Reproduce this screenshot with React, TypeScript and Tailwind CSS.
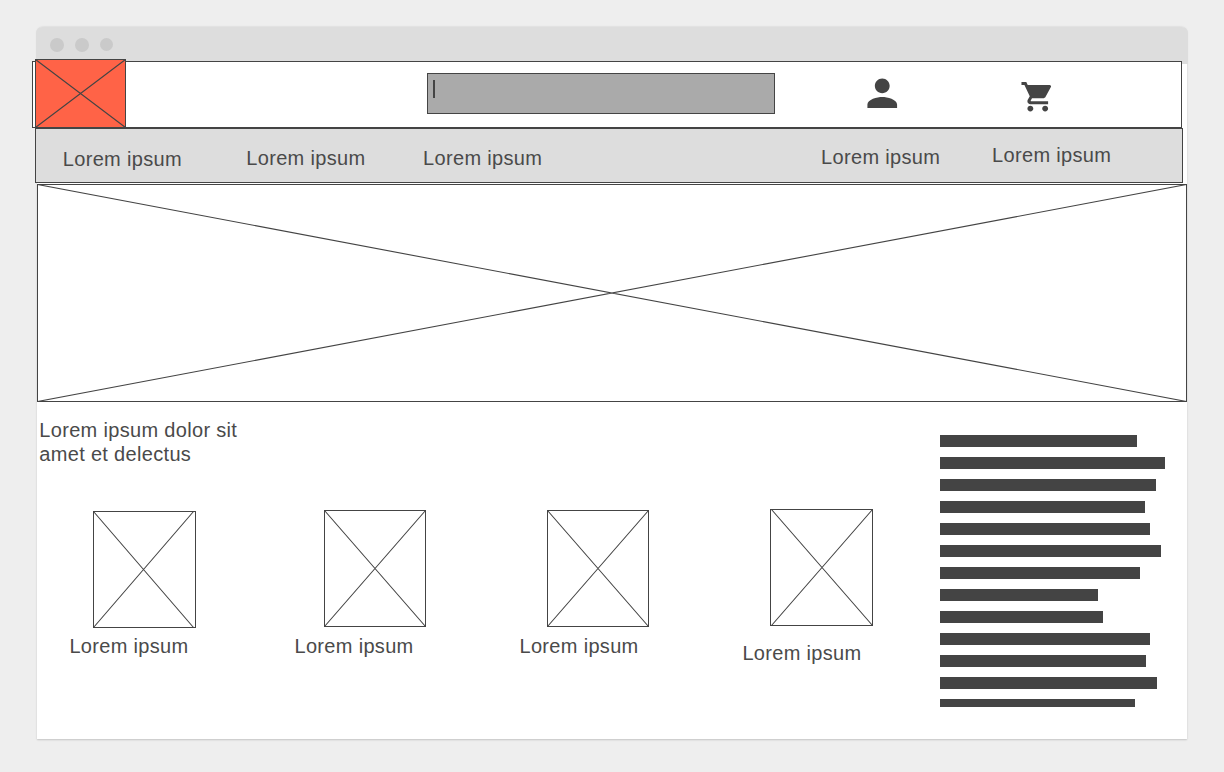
import React from "react";

type CrossProps = { width: number; height: number; inset?: [number, number]; className: string };

/* Image placeholder: an outlined box with both diagonals. */
function ImagePlaceholder({ width, height, inset = [0, 0], className }: CrossProps) {
  const left = 0.5 + inset[0];
  const right = width - 0.5 - inset[1];
  return (
    <svg width={width} height={height} viewBox={`0 0 ${width} ${height}`} fill="none" stroke="#444444" className={`block shrink-0 ${className}`}>
      <rect x="0.5" y="0.5" width={width - 1} height={height - 1} shapeRendering="crispEdges" />
      <path d={`M${left} 0.5L${right} ${height - 0.5}M${right} 0.5L${left} ${height - 0.5}`} strokeWidth="1.1" />
    </svg>
  );
}

function WindowBar() {
  return (
    <div className="-mx-px flex h-[37px] items-center rounded-t-md bg-[#dddddd] pb-[2px] pl-[14px]">
      <span className="size-[14px] rounded-full bg-[#cacaca]" />
      <span className="ml-[11px] size-[14px] rounded-full bg-[#cacaca]" />
      <span className="ml-[11px] size-[13px] rounded-full bg-[#cacaca]" />
    </div>
  );
}

function Header() {
  return (
    <header className="-mt-[3px] -ml-[5px] flex h-[67px] w-[1150px] items-start border border-[#444444] bg-white pl-[2px]">
      <ImagePlaceholder width={91} height={69} className="-mt-[3px] bg-[#ff6347]" />
      <div className="mt-[11px] ml-[301px] h-[41px] w-[348px] border border-[#444444] bg-[#aaaaaa] pt-[6px] pl-[5px]">
        <div className="h-[18px] w-[2px] bg-[#444444]" />
      </div>
      <svg viewBox="0 0 24 24" fill="#444444" className="mt-[9.4px] ml-[84.5px] size-[44.5px] shrink-0">
        <path d="M12 12c2.21 0 4-1.79 4-4s-1.79-4-4-4-4 1.79-4 4 1.79 4 4 4zm0 2c-2.67 0-8 1.34-8 4v2h16v-2c0-2.66-5.33-4-8-4z" />
      </svg>
      <svg viewBox="0 0 24 24" fill="#444444" className="mt-[17.4px] ml-[115.5px] size-[35.5px] shrink-0">
        <path d="M7 18c-1.1 0-1.99.9-1.99 2S5.9 22 7 22s2-.9 2-2-.9-2-2-2zM1 2v2h2l3.6 7.59-1.35 2.45c-.16.28-.25.61-.25.96 0 1.1.9 2 2 2h12v-2H7.42c-.14 0-.25-.11-.25-.25l.03-.12.9-1.63h7.45c.75 0 1.41-.41 1.75-1.03l3.58-6.49A1.003 1.003 0 0 0 20 4H5.21l-.94-2H1zm16 16c-1.1 0-1.99.9-1.99 2s.89 2 1.99 2 2-.9 2-2-.9-2-2-2z" />
      </svg>
    </header>
  );
}

const navItems = [
  "ml-[26.8px] mt-[18px]",
  "ml-[63.5px] mt-[17px]",
  "ml-[56.8px] mt-[17px]",
  "ml-[278px] mt-[16px]",
  "ml-[51px] mt-[14px]",
];

function Navigation() {
  return (
    <nav className="-ml-[2px] flex h-[55px] w-[1148px] items-start border border-[#444444] bg-[#dddddd]">
      {navItems.map((spacing, i) => (
        <span key={i} className={`w-[120px] shrink-0 whitespace-nowrap ${spacing}`}>Lorem ipsum</span>
      ))}
    </nav>
  );
}

const products: { width: number; inset: [number, number]; column: string; image: string; label: string }[] = [
  { width: 103, inset: [0, 2], column: "pt-[2px] w-[225.1px]", image: "ml-[23.6px]", label: "mt-[6px]" },
  { width: 102, inset: [0, 0], column: "pt-[1px] w-[225px]", image: "ml-[29.5px]", label: "mt-[7px]" },
  { width: 102, inset: [0, 0], column: "pt-[1px] w-[222.9px]", image: "ml-[27.5px]", label: "mt-[7px]" },
  { width: 103, inset: [1, 0], column: "w-[140px]", image: "ml-[27.6px]", label: "mt-[15px]" },
];

function Products() {
  return (
    <section className="w-[903px]">
      <h2 className="mt-[16px] ml-[2.3px] w-[220px]">Lorem ipsum dolor sit amet et delectus</h2>
      <div className="mt-[43px] ml-[32.4px] flex items-start">
        {products.map((p, i) => (
          <div key={i} className={`shrink-0 ${p.column}`}>
            <ImagePlaceholder width={p.width} height={117} inset={p.inset} className={p.image} />
            <p className={`whitespace-nowrap ${p.label}`}>Lorem ipsum</p>
          </div>
        ))}
      </div>
    </section>
  );
}

const lines = [197, 225, 216, 205, 210, 221, 200, 158, 163, 210, 206, 217, 195];

function TextBlock() {
  return (
    <aside className="mt-[33px] flex h-[272px] flex-col gap-[10px] overflow-hidden">
      {lines.map((width, i) => (
        <div key={i} className="h-3 shrink-0 bg-[#444444]" style={{ width }} />
      ))}
    </aside>
  );
}

export default function App() {
  return (
    <div className="h-[772px] w-[1224px] overflow-hidden bg-[#eeeeee] pt-[27px] pl-[37px] font-['Liberation_Sans',Arial,sans-serif] text-[20px] leading-[24px] tracking-[0.32px] text-[#4a4a4a]">
      <div className="h-[712px] w-[1150px] rounded-t-md bg-white shadow-[0_0.5px_2px_rgba(0,0,0,0.18)]">
        <WindowBar />
        <Header />
        <Navigation />
        <ImagePlaceholder width={1150} height={218} className="mt-px bg-white" />
        <main className="flex items-start">
          <Products />
          <TextBlock />
        </main>
      </div>
    </div>
  );
}
